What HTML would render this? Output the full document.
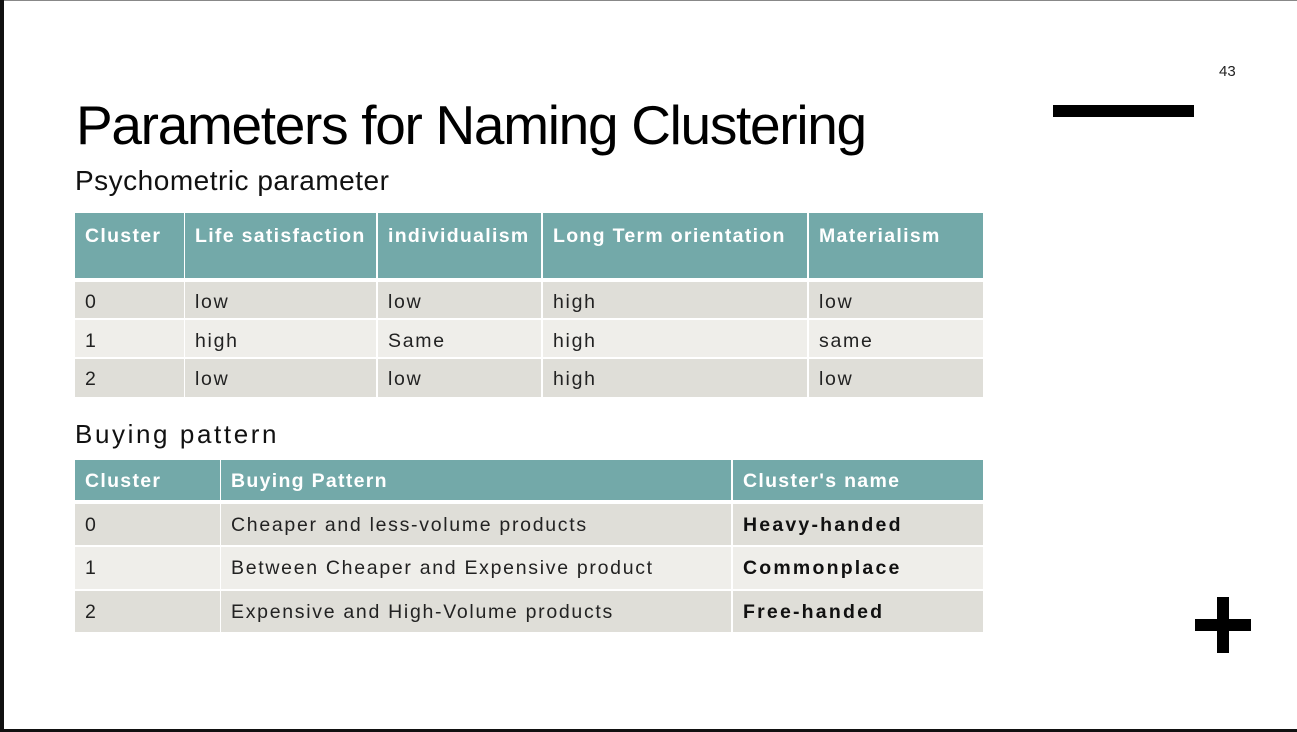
<!DOCTYPE html>
<html><head><style>
body{margin:0;width:1297px;height:732px;background:#fff;position:relative;overflow:hidden;font-family:"Liberation Sans",sans-serif;}
.a{position:absolute}
.c{position:absolute;box-sizing:border-box;padding:12px 0 0 10px;font-size:19.5px;color:#222;letter-spacing:1.7px;white-space:nowrap}
.h{background:#73a9a9;color:#fff;font-weight:bold;letter-spacing:1.3px}
.o{background:#dfded8}.e{background:#efeeea}
b{font-weight:bold;color:#111;letter-spacing:2.2px}
</style></head><body>
<div class="a" style="left:0;top:0;width:1297px;height:1px;background:#888"></div>
<div class="a" style="left:0;top:0;width:4px;height:732px;background:#111"></div>
<div class="a" style="left:0;top:729px;width:1297px;height:3px;background:#111"></div>
<div class="a" style="left:1219px;top:63px;font-size:15px;color:#222">43</div>
<div class="a" style="left:1053px;top:105px;width:141px;height:12px;background:#000"></div>
<div class="a" style="left:1217px;top:597px;width:12px;height:56px;background:#000"></div>
<div class="a" style="left:1195px;top:619px;width:56px;height:12px;background:#000"></div>
<div class="a" style="left:76px;top:93px;font-size:55px;letter-spacing:-1.3px;color:#000">Parameters for Naming Clustering</div>
<div class="a" style="left:75px;top:165px;font-size:28px;letter-spacing:0.5px;color:#111">Psychometric parameter</div>
<div class="a" style="left:75px;top:419px;font-size:26px;letter-spacing:2.6px;color:#111">Buying pattern</div>

<div class="c h" style="left:75px;top:213px;width:109px;height:65px">Cluster</div>
<div class="c h" style="left:185px;top:213px;width:191px;height:65px">Life satisfaction</div>
<div class="c h" style="left:378px;top:213px;width:163px;height:65px">individualism</div>
<div class="c h" style="left:543px;top:213px;width:264px;height:65px">Long Term orientation</div>
<div class="c h" style="left:809px;top:213px;width:174px;height:65px">Materialism</div>

<div class="c o" style="left:75px;top:282px;width:109px;height:36px;padding-top:9px">0</div>
<div class="c o" style="left:185px;top:282px;width:191px;height:36px;padding-top:9px">low</div>
<div class="c o" style="left:378px;top:282px;width:163px;height:36px;padding-top:9px">low</div>
<div class="c o" style="left:543px;top:282px;width:264px;height:36px;padding-top:9px">high</div>
<div class="c o" style="left:809px;top:282px;width:174px;height:36px;padding-top:9px">low</div>

<div class="c e" style="left:75px;top:320px;width:109px;height:37px;padding-top:10px">1</div>
<div class="c e" style="left:185px;top:320px;width:191px;height:37px;padding-top:10px">high</div>
<div class="c e" style="left:378px;top:320px;width:163px;height:37px;padding-top:10px">Same</div>
<div class="c e" style="left:543px;top:320px;width:264px;height:37px;padding-top:10px">high</div>
<div class="c e" style="left:809px;top:320px;width:174px;height:37px;padding-top:10px">same</div>

<div class="c o" style="left:75px;top:359px;width:109px;height:38px;padding-top:9px">2</div>
<div class="c o" style="left:185px;top:359px;width:191px;height:38px;padding-top:9px">low</div>
<div class="c o" style="left:378px;top:359px;width:163px;height:38px;padding-top:9px">low</div>
<div class="c o" style="left:543px;top:359px;width:264px;height:38px;padding-top:9px">high</div>
<div class="c o" style="left:809px;top:359px;width:174px;height:38px;padding-top:9px">low</div>

<div class="c h" style="left:75px;top:460px;width:145px;height:40px;padding-top:10px">Cluster</div>
<div class="c h" style="left:221px;top:460px;width:510px;height:40px;padding-top:10px">Buying Pattern</div>
<div class="c h" style="left:733px;top:460px;width:250px;height:40px;padding-top:10px">Cluster's name</div>

<div class="c o" style="left:75px;top:504px;width:145px;height:41px;padding-top:10px">0</div>
<div class="c o" style="left:221px;top:504px;width:510px;height:41px;padding-top:10px">Cheaper and less-volume products</div>
<div class="c o" style="left:733px;top:504px;width:250px;height:41px;padding-top:10px"><b>Heavy-handed</b></div>

<div class="c e" style="left:75px;top:547px;width:145px;height:42px;padding-top:10px">1</div>
<div class="c e" style="left:221px;top:547px;width:510px;height:42px;padding-top:10px">Between Cheaper and Expensive product</div>
<div class="c e" style="left:733px;top:547px;width:250px;height:42px;padding-top:10px"><b>Commonplace</b></div>

<div class="c o" style="left:75px;top:591px;width:145px;height:41px;padding-top:10px">2</div>
<div class="c o" style="left:221px;top:591px;width:510px;height:41px;padding-top:10px">Expensive and High-Volume products</div>
<div class="c o" style="left:733px;top:591px;width:250px;height:41px;padding-top:10px"><b>Free-handed</b></div>
</body></html>
